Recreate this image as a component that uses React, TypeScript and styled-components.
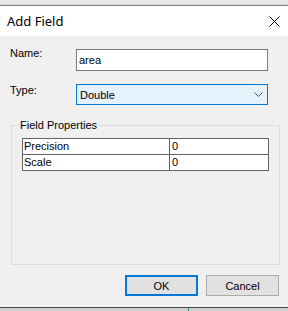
import React from "react";
import styled, { createGlobalStyle } from "styled-components";

const Global = createGlobalStyle`
  html, body { margin: 0; padding: 0; background: #f0f0f0; }
  body { font-family: "Liberation Sans", Arial, sans-serif; font-size: 11px; color: #000; }
  * { box-sizing: border-box; }
`;

const Screen = styled.div`
  width: 288px;
  height: 311px;
  display: flex;
  flex-direction: column;
  overflow: hidden;
`;

const TopBand = styled.div`
  height: 6px;
  flex: none;
  background: linear-gradient(#ececec, #dedede);
  border-bottom: 1px solid #7c7c7c;
`;

const TitleBar = styled.div`
  height: 30px;
  flex: none;
  background: #ffffff;
  display: flex;
  align-items: center;
  justify-content: space-between;
  padding: 0 8px 0 7px;
`;

const Title = styled.span`
  font-family: "Noto Sans", "Open Sans", sans-serif;
  font-size: 13px;
  color: #000;
  line-height: 1;
`;

const CloseButton = styled.span`
  display: flex;
  width: 11px;
  height: 11px;
`;

const Body = styled.div`
  flex: none;
  height: 271px;
  background: #f0f0f0;
  display: flex;
  flex-direction: column;
  padding: 13px 0 0 10px;
`;

const FormGrid = styled.div`
  display: grid;
  grid-template-columns: 66px 192px;
  grid-template-rows: 22px 21px;
  row-gap: 13px;
  align-items: center;
`;

const Label = styled.label<{ $offset: number }>`
  align-self: start;
  font-size: 11px;
  line-height: 13px;
  margin-top: ${(p) => p.$offset}px;
`;

const TextInput = styled.div`
  height: 22px;
  border: 1px solid #7a7a7a;
  background: #fff;
  display: flex;
  align-items: center;
  padding-left: 2px;
`;

const Select = styled.div`
  height: 21px;
  border: 1px solid #0078d7;
  background: #e5f1fb;
  display: flex;
  align-items: center;
  justify-content: space-between;
  padding: 0 4px 0 3px;
`;

const Group = styled.fieldset`
  margin: 13px 0 0 1px;
  width: 269px;
  height: 147px;
  border: 1px solid #dcdcdc;
  padding: 6px 10px 0 10px;
  min-width: 0;
`;

const Legend = styled.legend`
  padding: 0 1px;
  margin-left: -3px;
  font-size: 11px;
  line-height: 14px;
`;

const PropGrid = styled.div`
  display: grid;
  grid-template-columns: 147px 99px;
  grid-auto-rows: 16px;
  border-top: 1px solid #646464;
  border-left: 1px solid #646464;
  width: 247px;
`;

const Cell = styled.div<{ $pad: number }>`
  border-right: 1px solid #646464;
  border-bottom: 1px solid #646464;
  background: #fff;
  padding-left: ${(p) => p.$pad}px;
  display: flex;
  align-items: center;
  font-size: 11px;
  line-height: 15px;
`;

const ButtonRow = styled.div`
  display: flex;
  gap: 8px;
  margin: 10px 0 0 115px;
`;

const Button = styled.div<{ $primary?: boolean }>`
  width: 73px;
  height: 21px;
  background: #e1e1e1;
  border: ${(p) => (p.$primary ? "2px solid #0078d7" : "1px solid #adadad")};
  display: flex;
  align-items: center;
  justify-content: center;
  font-size: 11px;
`;

const BottomBand = styled.div`
  flex: 1;
  background: #cfcfcf;
  border-top: 1px solid #4a4a4a;
  display: flex;
  padding-left: 188px;
`;

const Tick = styled.span`
  width: 1px;
  height: 3px;
  background: #2a8a8a;
`;

export default function App() {
  return (
    <Screen>
      <Global />
      <TopBand />
      <TitleBar>
        <Title>Add Field</Title>
        <CloseButton>
          <svg width="11" height="11" viewBox="0 0 11 11">
            <path d="M0.5 0.5 L10.5 10.5 M10.5 0.5 L0.5 10.5" stroke="#000" strokeWidth="1" fill="none" />
          </svg>
        </CloseButton>
      </TitleBar>
      <Body>
        <FormGrid>
          <Label $offset={-2}>Name:</Label>
          <TextInput>area</TextInput>
          <Label $offset={0}>Type:</Label>
          <Select>
            <span>Double</span>
            <svg width="9" height="5" viewBox="0 0 9 5">
              <path d="M0.5 0.5 L4.5 4.5 L8.5 0.5" stroke="#5a5a5a" strokeWidth="1" fill="none" />
            </svg>
          </Select>
        </FormGrid>
        <Group>
          <Legend>Field Properties</Legend>
          <PropGrid>
            <Cell $pad={1}>Precision</Cell>
            <Cell $pad={2}>0</Cell>
            <Cell $pad={1}>Scale</Cell>
            <Cell $pad={2}>0</Cell>
          </PropGrid>
        </Group>
        <ButtonRow>
          <Button $primary>OK</Button>
          <Button>Cancel</Button>
        </ButtonRow>
      </Body>
      <BottomBand>
        <Tick />
      </BottomBand>
    </Screen>
  );
}
